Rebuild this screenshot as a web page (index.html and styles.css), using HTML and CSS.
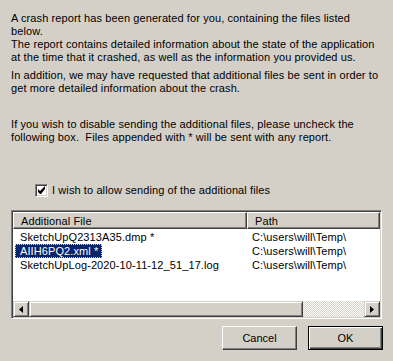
FILE: index.html
```html
<!DOCTYPE html>
<html>
<head>
<title>Crash Report</title>
<link rel="stylesheet" href="styles.css">
</head>
<body>
<div class="dialog">
<div class="msg">
<p class="para tight">A crash report has been generated for you, containing the files listed<br>below.</p>
<p class="para">The report contains detailed information about the state of the application<br>at the time that it crashed, as well as the information you provided us.</p>
<p class="para">In addition, we may have requested that additional files be sent in order to<br>get more detailed information about the crash.</p>
<p class="para gap">If you wish to disable sending the additional files, please uncheck the<br>following box.&nbsp; Files appended with * will be sent with any report.</p>
</div>

<label class="check-row">
<span class="checkbox">
<svg width="9" height="9" viewBox="0 0 9 9"><path d="M1 3v3l2 2h1l4-5V0L3 5z" fill="#000"/></svg>
</span>
<span>I wish to allow sending of the additional files</span>
</label>

<div class="listview">
<div class="lv-head">
<div class="lv-col col-file">Additional File</div>
<div class="lv-col col-path">Path</div>
</div>
<div class="lv-body">
<div class="lv-row"><div class="col-file"><span class="cell">SketchUpQ2313A35.dmp *</span></div><div class="col-path"><span class="cell">C:\users\will\Temp\</span></div></div>
<div class="lv-row"><div class="col-file"><span class="cell selected">AIIH6PQ2.xml *</span></div><div class="col-path"><span class="cell">C:\users\will\Temp\</span></div></div>
<div class="lv-row"><div class="col-file"><span class="cell">SketchUpLog-2020-10-11-12_51_17.log</span></div><div class="col-path"><span class="cell">C:\users\will\Temp\</span></div></div>
</div>
<div class="hscroll">
<div class="sb-btn"><svg width="4" height="7" viewBox="0 0 4 7"><path d="M4 0v7L0 3.5z" fill="#000"/></svg></div>
<div class="sb-thumb"></div>
<div class="sb-track"></div>
<div class="sb-btn"><svg width="4" height="7" viewBox="0 0 4 7"><path d="M0 0v7L4 3.5z" fill="#000"/></svg></div>
</div>
</div>

<div class="buttons">
<button class="btn">Cancel</button>
<button class="btn default">OK</button>
</div>
</div>
</body>
</html>
```

FILE: styles.css
```css
/* Crash report dialog, classic 3D look */

html, body
{ margin: 0;
background: #d4d0c8;
}

body
{ font-family: "Liberation Sans", Arial, sans-serif;
font-size: 11px;
line-height: 13px;
letter-spacing: 0.1px;
color: #000;
}

.dialog
{ width: 393px;
height: 361px;
padding: 12px 0 0 11px;
box-sizing: border-box;
}

.msg
{ width: 378px;
white-space: nowrap;
}

.para
{ margin: 0 0 5px 0;
}

.para.tight
{ margin-bottom: 0;
}

.para.gap
{ margin-top: 23px;
}

/* Checkbox */

.check-row
{ display: flex;
align-items: center;
gap: 4px;
margin: 40px 0 0 24px;
height: 13px;
}

.checkbox
{ width: 13px;
height: 13px;
box-sizing: border-box;
background: #fff;
border-top: 1px solid #808080;
border-left: 1px solid #808080;
border-right: 1px solid #fff;
border-bottom: 1px solid #fff;
box-shadow: inset 1px 1px 0 #404040, inset -1px -1px 0 #d4d0c8;
display: flex;
align-items: center;
justify-content: center;
}

/* List view */

.listview
{ margin-top: 13px;
width: 371px;
height: 109px;
box-sizing: border-box;
background: #fff;
border-top: 1px solid #808080;
border-left: 1px solid #808080;
border-right: 1px solid #fff;
border-bottom: 1px solid #fff;
box-shadow: inset 1px 1px 0 #404040, inset -1px -1px 0 #d4d0c8;
padding: 1px;
display: flex;
flex-direction: column;
}

.lv-head
{ display: flex;
height: 17px;
flex: none;
}

.lv-col
{ background: #d4d0c8;
box-sizing: border-box;
border-top: 1px solid #fff;
border-left: 1px solid #fff;
border-right: 1px solid #404040;
border-bottom: 1px solid #404040;
box-shadow: inset -1px -1px 0 #808080;
padding: 2px 0 0 7px;
}

.col-file
{ width: 234px;
flex: none;
}

.col-path
{ flex: 1;
}

.lv-body
{ flex: 1;
padding-top: 1px;
}

.lv-row
{ display: flex;
height: 14px;
}

.lv-row .col-file
{ padding-left: 2px;
box-sizing: border-box;
}

.cell
{ display: inline-block;
padding: 0 4px 0 5px;
line-height: 14px;
white-space: nowrap;
}

.cell.selected
{ background: #0a246a;
color: #fff;
outline: 1px dotted #d4d0c8;
outline-offset: -1px;
}

/* Horizontal scrollbar */

.hscroll
{ display: flex;
height: 16px;
flex: none;
}

.sb-btn
{ width: 16px;
box-sizing: border-box;
background: #d4d0c8;
border-top: 1px solid #d4d0c8;
border-left: 1px solid #d4d0c8;
border-right: 1px solid #404040;
border-bottom: 1px solid #404040;
box-shadow: inset 1px 1px 0 #fff, inset -1px -1px 0 #808080;
display: flex;
align-items: center;
justify-content: center;
}

.sb-thumb
{ width: 274px;
box-sizing: border-box;
background: #d4d0c8;
border-top: 1px solid #d4d0c8;
border-left: 1px solid #d4d0c8;
border-right: 1px solid #404040;
border-bottom: 1px solid #404040;
box-shadow: inset 1px 1px 0 #fff, inset -1px -1px 0 #808080;
}

.sb-track
{ flex: 1;
background-color: #fff;
background-image: repeating-conic-gradient(#d4d0c8 0 25%, #fff 0 50%);
background-size: 2px 2px;
}

/* Buttons */

.buttons
{ display: flex;
justify-content: flex-end;
gap: 11px;
margin: 7px 10px 0 0;
}

.btn
{ width: 75px;
height: 24px;
font: inherit;
color: #000;
background: #d4d0c8;
border-top: 1px solid #fff;
border-left: 1px solid #fff;
border-right: 1px solid #404040;
border-bottom: 1px solid #404040;
box-shadow: inset -1px -1px 0 #808080;
padding: 0;
}

.btn.default
{ border: 1px solid #000;
box-shadow: inset 1px 1px 0 #fff, inset -1px -1px 0 #404040, inset -2px -2px 0 #808080;
}
```
